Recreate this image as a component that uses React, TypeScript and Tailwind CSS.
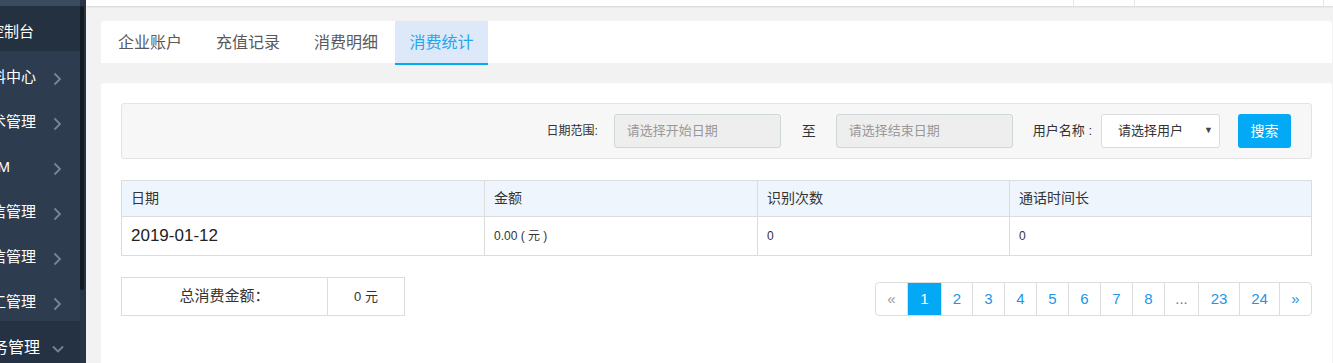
import React from 'react';

const menu = [
  { label: '控制台', box: 'w-[34px]', active: true },
  { label: '资料中心', box: 'w-[36px]' },
  { label: '话术管理', box: 'w-[36px]' },
  { label: 'CRM', box: 'w-[10px]' },
  { label: '短信管理', box: 'w-[36px]' },
  { label: '微信管理', box: 'w-[36px]' },
  { label: '员工管理', box: 'w-[36px]' },
];

const pages = [
  { t: '«', w: 'w-[31px]', c: 'text-[#999]' },
  { t: '1', w: 'w-[34px]', active: true },
  { t: '2', w: 'w-[31px]' },
  { t: '3', w: 'w-[32px]' },
  { t: '4', w: 'w-[32px]' },
  { t: '5', w: 'w-[32px]' },
  { t: '6', w: 'w-[32px]' },
  { t: '7', w: 'w-[32px]' },
  { t: '8', w: 'w-[32px]' },
  { t: '...', w: 'w-[34px]', c: 'text-[#777]' },
  { t: '23', w: 'w-[41px]' },
  { t: '24', w: 'w-[40px]' },
  { t: '»', w: 'w-[32px]' },
];

const ChevronRight = () => (
  <svg width="9" height="14" viewBox="0 0 9 14" className="shrink-0">
    <path d="M1.5 1.5 L7 7 L1.5 12.5" fill="none" stroke="#7b8591" strokeWidth="1.8" />
  </svg>
);

const ChevronDown = () => (
  <svg width="12" height="8" viewBox="0 0 12 8" className="shrink-0">
    <path d="M1 1.5 L6 6.5 L11 1.5" fill="none" stroke="#7b8591" strokeWidth="1.8" />
  </svg>
);

const Sidebar = () => (
  <div className="w-[86px] h-full flex shrink-0 bg-[#2e3c4f]">
    <div className="w-[80px] h-full overflow-hidden flex flex-col">
      <div className="h-[6px] bg-[#3a4a5f] shrink-0" />
      {menu.map(m => (
        <div
          key={m.label}
          className={
            'h-[45px] shrink-0 flex items-center pt-[7px] text-[15px] text-white ' +
            (m.active ? 'bg-[#243140]' : '')
          }
        >
          <div className="w-[53px] shrink-0 flex">
            <div className={m.box + ' shrink-0 flex justify-end'}>
              <span className="whitespace-nowrap shrink-0">{m.label}</span>
            </div>
          </div>
          {!m.active && (
            <div className="pt-[3px] flex">
              <ChevronRight />
            </div>
          )}
        </div>
      ))}
      <div className="h-[45px] shrink-0 flex items-center pt-[8px] text-[16px] text-white bg-[#253243]">
        <div className="w-[40px] shrink-0 flex justify-end">
          <span className="whitespace-nowrap shrink-0">财务管理</span>
        </div>
        <div className="ml-[12px] pt-[2px] flex">
          <ChevronDown />
        </div>
      </div>
    </div>
    <div className="w-[6px] h-full bg-[#283546] pt-[6px]">
      <div className="w-[4px] h-[284px] rounded-[2px] bg-[#151b22]" />
    </div>
  </div>
);

const Tabs = () => (
  <div className="h-[42px] bg-white rounded-t-[3px] flex items-start shrink-0">
    {['企业账户', '充值记录', '消费明细'].map(t => (
      <div key={t} className="w-[98px] h-[42px] flex items-center justify-center pt-[2px] text-[16px] text-[#595959]">
        {t}
      </div>
    ))}
    <div className="w-[93px] h-[44px] flex items-center justify-center pt-[2px] text-[16px] text-[#27a4ef] bg-[#dde9f8] border-b-2 border-[#03a9f4]">
      消费统计
    </div>
  </div>
);

const SearchBar = () => (
  <div className="h-[56px] border border-[#e3e3e3] bg-[#f7f7f7] rounded-[3px] flex items-center justify-end pr-[20px]">
    <span className="text-[12px] text-[#333]">日期范围:</span>
    <div className="ml-[16px] w-[167px] h-[34px] rounded-[3px] border border-[#cfd8d6] bg-[#eeeeee] flex items-center pl-[12px] text-[13px] text-[#999]">
      请选择开始日期
    </div>
    <span className="ml-[21px] text-[14px] text-[#333]">至</span>
    <div className="ml-[20px] w-[177px] h-[34px] rounded-[3px] border border-[#cfd8d6] bg-[#eeeeee] flex items-center pl-[12px] text-[13px] text-[#999]">
      请选择结束日期
    </div>
    <span className="ml-[20px] text-[13px] text-[#333] whitespace-nowrap">用户名称 :</span>
    <div className="ml-[9px] w-[119px] h-[34px] rounded-[3px] border border-[#d8dcdc] bg-white flex items-center justify-between pl-[16px] pr-[6px] text-[13px] text-[#333]">
      <span>请选择用户</span>
      <span className="text-[9px] text-[#444]">▼</span>
    </div>
    <div className="ml-[18px] w-[53px] h-[34px] rounded-[3px] bg-[#03a9f4] flex items-center justify-center text-[14px] text-white">
      搜索
    </div>
  </div>
);

const StatTable = () => (
  <div className="mt-[21px] border border-[#dcdcdc]">
    <div className="grid grid-cols-[362px_273px_252px_1fr] h-[36px] bg-[#eff5fc] border-b border-[#dcdcdc] text-[14px] text-[#333]">
      {['日期', '金额', '识别次数', '通话时间长'].map((h, i) => (
        <div key={h} className={'flex items-center pl-[9px] ' + (i > 0 ? 'border-l border-[#dcdcdc]' : '')}>
          {h}
        </div>
      ))}
    </div>
    <div className="grid grid-cols-[362px_273px_252px_1fr] h-[38px] text-[12px] text-[#333]">
      <div className="flex items-center pl-[9px] text-[17px] text-[#222]">2019-01-12</div>
      <div className="flex items-center pl-[9px] border-l border-[#dcdcdc]">0.00 ( 元 )</div>
      <div className="flex items-center pl-[9px] border-l border-[#dcdcdc]">0</div>
      <div className="flex items-center pl-[9px] border-l border-[#dcdcdc]">0</div>
    </div>
  </div>
);

const Footer = () => (
  <div className="mt-[21px] flex justify-between items-start">
    <div className="w-[284px] h-[39px] border border-[#dcdcdc] grid grid-cols-[206px_1fr]">
      <div className="flex items-center justify-center text-[15px] text-[#333] border-r border-[#dcdcdc]">总消费金额：</div>
      <div className="flex items-center justify-center text-[13px] text-[#333]">0 元</div>
    </div>
    <div className="mt-[5px] flex border border-[#dddddd] rounded-[4px] overflow-hidden h-[34px]">
      {pages.map((p, i) => (
        <div
          key={p.t + i}
          className={
            p.w +
            ' h-full flex items-center justify-center text-[15px] ' +
            (i > 0 ? 'border-l border-[#dddddd] ' : '') +
            (p.active ? 'bg-[#03a9f4] text-white border-[#03a9f4]' : p.c ?? 'text-[#2196e8]')
          }
        >
          {p.t}
        </div>
      ))}
    </div>
  </div>
);

export default function App() {
  return (
    <div className="w-[1333px] h-[363px] overflow-hidden flex font-[family-name:'Liberation_Sans','Noto_Sans_CJK_SC',sans-serif]">
      <Sidebar />
      <div className="flex-1 h-full flex flex-col bg-[#f2f2f2]">
        <div className="h-[6px] bg-white shadow-[0_1px_2px_rgba(0,0,0,0.12)] flex shrink-0 relative z-10">
          <div className="flex-1" />
          <div className="w-[61px] border-l border-[#e6e6e6]" />
          <div className="w-[189px] border-l border-[#e6e6e6]" />
          <div className="w-[10px] border-l border-[#e6e6e6]" />
        </div>
        <div className="flex-1 flex flex-col pl-[15px] pr-[1px] pt-[15px]">
          <Tabs />
          <div className="mt-[20px] flex-1 bg-white rounded-t-[3px] px-[20px] pt-[20px]">
            <SearchBar />
            <StatTable />
            <Footer />
          </div>
        </div>
      </div>
    </div>
  );
}
